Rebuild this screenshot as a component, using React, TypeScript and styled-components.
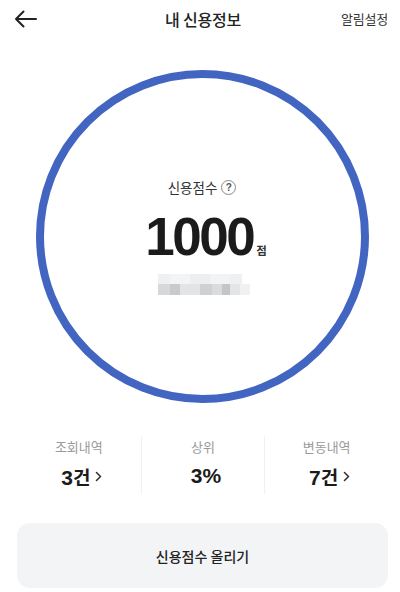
import React from "react";
import styled, { createGlobalStyle } from "styled-components";

const Global = createGlobalStyle`
  html, body { margin: 0; padding: 0; background: #ffffff; }
  body { font-family: "Noto Sans CJK KR", "Noto Sans", sans-serif; color: #1f1f1f; }
  * { box-sizing: border-box; }
`;

const Page = styled.div`
  width: 400px;
  height: 592px;
  overflow: hidden;
  display: flex;
  flex-direction: column;
`;

const Header = styled.header`
  height: 37px;
  display: grid;
  grid-template-columns: 1fr auto 1fr;
  align-items: center;
  padding: 0 12px 0 14px;
`;

const BackButton = styled.button`
  justify-self: start;
  border: 0;
  background: none;
  padding: 0;
  display: flex;
  color: #222;
`;

const Title = styled.h1`
  margin: 0 0 0 4px;
  font-size: 16px;
  font-weight: 500;
  color: #222;
  letter-spacing: -0.2px;
`;

const HeaderLink = styled.span`
  justify-self: end;
  font-size: 13px;
  color: #333;
  letter-spacing: -0.2px;
`;

const GaugeWrap = styled.div`
  display: flex;
  justify-content: center;
  padding: 33px 0 0 4px;
`;

const Ring = styled.div`
  width: 333px;
  height: 333px;
  border-radius: 50%;
  border: 8px solid #4165c0;
  display: flex;
  flex-direction: column;
  align-items: center;
  padding-top: 100px;
`;

const ScoreLabel = styled.div`
  display: flex;
  align-items: center;
  gap: 4px;
  font-size: 13.5px;
  color: #333;
  height: 18px;
`;

const Help = styled.span`
  width: 15px;
  height: 15px;
  border-radius: 50%;
  border: 1px solid #888;
  font-family: "Liberation Sans", sans-serif;
  font-size: 10px;
  font-weight: 700;
  color: #555;
  display: flex;
  align-items: center;
  justify-content: center;
`;

const ScoreRow = styled.div`
  display: flex;
  align-items: baseline;
  margin-top: 13px;
  margin-left: 8px;
  height: 56px;
`;

const ScoreNum = styled.span`
  font-family: "Liberation Sans", Arial, sans-serif;
  font-size: 53px;
  font-weight: 700;
  letter-spacing: -2.5px;
  color: #1b1b1b;
  line-height: 56px;
`;

const ScoreUnit = styled.span`
  font-size: 11.5px;
  font-weight: 700;
  color: #333;
  margin-left: 3px;
`;

const Mosaic = styled.div`
  margin-top: 9px;
  margin-left: 4px;
  display: flex;
  flex-direction: column;
  filter: blur(0.6px);
`;

const MosaicRow = styled.div`
  display: flex;
`;

const Tile = styled.span<{ $c: string; $w: number; $h: number }>`
  display: block;
  width: ${(p) => p.$w}px;
  height: ${(p) => p.$h}px;
  background: ${(p) => p.$c};
`;

const Stats = styled.div`
  margin-top: 33px;
  display: grid;
  grid-template-columns: repeat(3, 1fr);
  padding: 0 12px 0 17px;
`;

const Stat = styled.div<{ $divider?: boolean }>`
  display: flex;
  flex-direction: column;
  align-items: center;
  gap: 8px;
  padding: 2px 0 6px;
  border-left: ${(p) => (p.$divider ? "1px solid #f0f0f0" : "0")};
`;

const StatLabel = styled.span`
  font-size: 13px;
  color: #9a9a9a;
  height: 18px;
  line-height: 18px;
`;

const StatValue = styled.span`
  display: flex;
  align-items: center;
  gap: 5px;
  font-size: 19px;
  font-weight: 700;
  color: #1b1b1b;
  height: 24px;
  margin-left: 6px;
`;

const Num = styled.span`
  font-family: "Liberation Sans", Arial, sans-serif;
  font-size: 21px;
`;

const ActionButton = styled.button`
  margin: 29px 12px 0 17px;
  height: 65px;
  border: 0;
  border-radius: 13px;
  background: #f3f4f6;
  font-family: "Noto Sans CJK KR", sans-serif;
  font-size: 14px;
  font-weight: 500;
  color: #222;
`;

const Chevron = () => (
  <svg width="7" height="11" viewBox="0 0 7 11" fill="none">
    <path d="M1.5 1.5 L5.5 5.5 L1.5 9.5" stroke="#333" strokeWidth="1.6" strokeLinecap="round" strokeLinejoin="round" />
  </svg>
);

const mosaicTop = [
  { c: "#eef0f2", w: 12 }, { c: "#f3f4f5", w: 20 }, { c: "#eceef0", w: 20 }, { c: "#f2f3f4", w: 20 }, { c: "#eef0f2", w: 12 },
];
const mosaicBottom = [
  { c: "#d7d8da", w: 12 }, { c: "#c9cacc", w: 10 }, { c: "#e3e4e6", w: 20 }, { c: "#cfd0d2", w: 12 }, { c: "#dadbdd", w: 10 },
  { c: "#c4c5c7", w: 8 }, { c: "#e4e5e7", w: 10 }, { c: "#f0f1f3", w: 10 },
];

export default function App() {
  return (
    <>
      <Global />
      <Page>
        <Header>
          <BackButton aria-label="back">
            <svg width="23" height="18" viewBox="0 0 23 18" fill="none">
              <path d="M22 9 H2 M9.5 1.5 L2 9 L9.5 16.5" stroke="#222" strokeWidth="2" strokeLinecap="round" strokeLinejoin="round" />
            </svg>
          </BackButton>
          <Title>내 신용정보</Title>
          <HeaderLink>알림설정</HeaderLink>
        </Header>
        <GaugeWrap>
          <Ring>
            <ScoreLabel>
              신용점수 <Help>?</Help>
            </ScoreLabel>
            <ScoreRow>
              <ScoreNum>1000</ScoreNum>
              <ScoreUnit>점</ScoreUnit>
            </ScoreRow>
            <Mosaic>
              <MosaicRow>
                {mosaicTop.map((t, i) => (
                  <Tile key={i} $c={t.c} $w={t.w} $h={10} />
                ))}
              </MosaicRow>
              <MosaicRow>
                {mosaicBottom.map((t, i) => (
                  <Tile key={i} $c={t.c} $w={t.w} $h={11} />
                ))}
              </MosaicRow>
            </Mosaic>
          </Ring>
        </GaugeWrap>
        <Stats>
          <Stat>
            <StatLabel>조회내역</StatLabel>
            <StatValue>
              <span><Num>3</Num>건</span>
              <Chevron />
            </StatValue>
          </Stat>
          <Stat $divider>
            <StatLabel>상위</StatLabel>
            <StatValue>
              <Num>3%</Num>
            </StatValue>
          </Stat>
          <Stat $divider>
            <StatLabel>변동내역</StatLabel>
            <StatValue>
              <span><Num>7</Num>건</span>
              <Chevron />
            </StatValue>
          </Stat>
        </Stats>
        <ActionButton>신용점수 올리기</ActionButton>
      </Page>
    </>
  );
}
